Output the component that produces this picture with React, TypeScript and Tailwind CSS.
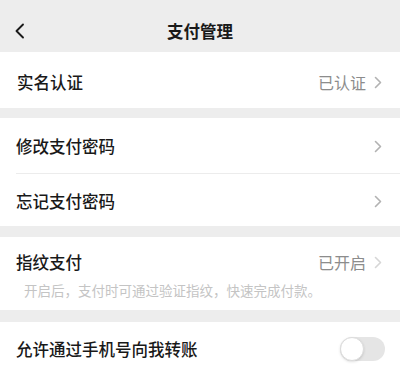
import React from "react";

const Chevron = ({ light }: { light?: boolean }) => (
  <svg width="8" height="13" viewBox="0 0 8 13" className="ml-[8px]">
    <path d="M1.5 1.5 L6.5 6.5 L1.5 11.5" fill="none" stroke={light ? "#d6d6d6" : "#b2b2b2"} strokeWidth="1.6" strokeLinecap="round" strokeLinejoin="round" />
  </svg>
);

export default function App() {
  return (
    <div
      className="w-[400px] h-[367px] overflow-hidden bg-[#ededed] text-[#191919]"
      style={{ fontFamily: '"Noto Sans CJK SC", "Noto Sans", sans-serif' }}
    >
      <div className="relative h-[52px] flex items-center justify-center">
        <svg width="12" height="16" viewBox="0 0 12 16" className="absolute left-[14px] top-[23px]">
          <path d="M9 1.5 L2.5 8 L9 14.5" fill="none" stroke="#1a1a1a" strokeWidth="1.9" strokeLinecap="round" strokeLinejoin="round" />
        </svg>
        <span className="text-[16.5px] font-bold leading-none mt-[10px]">支付管理</span>
      </div>

      <div className="bg-white h-[56px] flex items-center pl-[17px] pr-[18px] pt-[4px]">
        <span className="text-[16.5px] font-medium flex-1">实名认证</span>
        <span className="text-[16px] text-[#8c8c8c]">已认证</span>
        <Chevron />
      </div>

      <div className="mt-[10px] bg-white">
        <div className="h-[55px] flex items-center pl-[16px] pr-[18px] pt-[2px]">
          <span className="text-[16.5px] font-medium flex-1">修改支付密码</span>
          <Chevron />
        </div>
        <div className="ml-[16px] h-px bg-[#ececec]" />
        <div className="h-[52px] flex items-center pl-[16px] pr-[18px] pt-[2px]">
          <span className="text-[16.5px] font-medium flex-1">忘记支付密码</span>
          <Chevron />
        </div>
      </div>

      <div className="mt-[11px] bg-white h-[73px] pl-[16px] pr-[18px] pt-[13px]">
        <div className="flex items-center h-[24px]">
          <span className="text-[16.5px] font-medium flex-1">指纹支付</span>
          <span className="text-[16px] text-[#8c8c8c]">已开启</span>
          <Chevron light />
        </div>
        <div className="text-[13.5px] text-[#c4c4c4] mt-[10px] pl-[8px] leading-none">
          开启后，支付时可通过验证指纹，快速完成付款。
        </div>
      </div>

      <div className="mt-[12px] bg-white h-[60px] flex items-start pl-[16px] pr-[15px] pt-[14px]">
        <span className="text-[16.5px] font-medium flex-1 leading-[26px]">允许通过手机号向我转账</span>
        <div className="relative w-[45px] h-[24px] rounded-full bg-[#e5e5e5] mt-[1px]">
          <div className="absolute left-0 top-0 w-[24px] h-[24px] rounded-full bg-white border border-[#dcdcdc] shadow-sm" />
        </div>
      </div>
    </div>
  );
}
